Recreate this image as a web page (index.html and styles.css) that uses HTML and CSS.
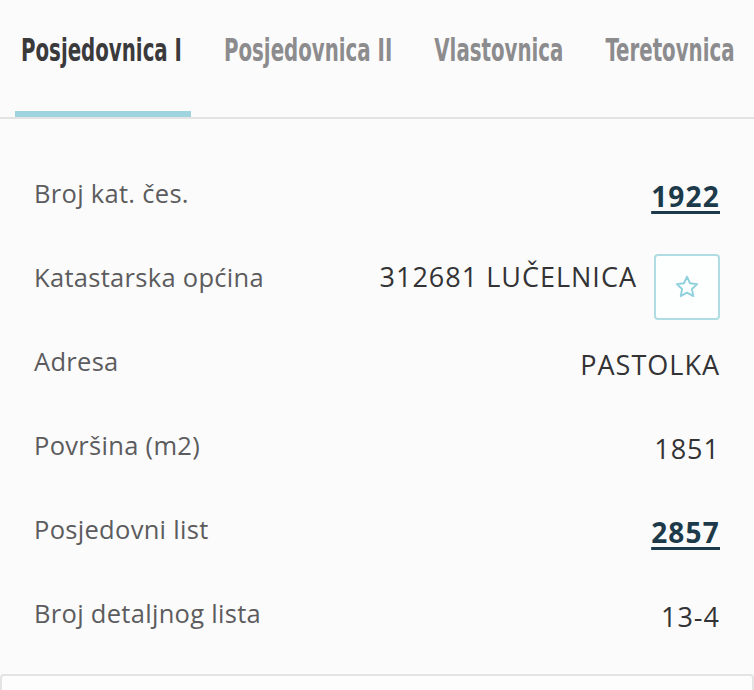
FILE: index.html
```html
<!DOCTYPE html>
<html lang="hr">
<head>
<meta charset="utf-8">
<title>Posjedovnica</title>
<link rel="stylesheet" href="styles.css">
</head>
<body>
<nav class="tabs">
  <div class="tab active"><span class="tab-label">Posjedovnica I</span></div>
  <div class="tab"><span class="tab-label">Posjedovnica II</span></div>
  <div class="tab"><span class="tab-label">Vlastovnica</span></div>
  <div class="tab"><span class="tab-label">Teretovnica</span></div>
</nav>
<section class="details">
  <div class="row">
    <span class="label">Broj kat. čes.</span>
    <a class="value link" href="#">1922</a>
  </div>
  <div class="row">
    <span class="label">Katastarska općina</span>
    <div class="value-group">
      <span class="value">312681 LUČELNICA</span>
      <button class="fav" type="button" aria-label="Favorit">
        <svg viewBox="0 0 24 24" width="28" height="28"><path d="M12 3.2l2.6 5.6 6.1.7-4.5 4.2 1.2 6.1L12 16.8l-5.4 3 1.2-6.1-4.5-4.2 6.1-.7z" fill="none" stroke="#8fd0dd" stroke-width="1.6" stroke-linejoin="round"/></svg>
      </button>
    </div>
  </div>
  <div class="row">
    <span class="label">Adresa</span>
    <span class="value">PASTOLKA</span>
  </div>
  <div class="row">
    <span class="label">Površina (m2)</span>
    <span class="value">1851</span>
  </div>
  <div class="row">
    <span class="label">Posjedovni list</span>
    <a class="value link" href="#">2857</a>
  </div>
  <div class="row">
    <span class="label">Broj detaljnog lista</span>
    <span class="value">13-4</span>
  </div>
</section>
<div class="card"></div>
</body>
</html>
```
FILE: styles.css
```css
* { box-sizing: border-box; }
html, body { margin: 0; padding: 0; }
body {
  background: #fbfbfb;
  width: 754px;
  height: 690px;
  overflow: hidden;
  font-family: "Open Sans", "Lato", "Liberation Sans", sans-serif;
}
.tabs {
  display: flex;
  gap: 27px;
  padding-left: 15px;
  height: 119px;
  border-bottom: 2px solid #e3e3e3;
}
.tab {
  height: 117px;
  padding: 34px 9px 0 6px;
  border-bottom: 6px solid transparent;
  font-family: "DejaVu Sans Condensed", "Liberation Sans Narrow", sans-serif;
  font-weight: 700;
  font-size: 22px;
  line-height: 34px;
  color: #8c8c8e;
  white-space: nowrap;
}
.tab.active {
  color: #3a3a3c;
  border-bottom-color: #9fd4df;
}
.tab-label {
  display: inline-block;
  transform: scaleY(1.48);
  transform-origin: 50% 50%;
}
.details {
  padding: 33px 34px 0 34px;
}
.row {
  height: 84px;
  display: flex;
  justify-content: space-between;
  align-items: center;
}
.label {
  font-size: 25.5px;
  letter-spacing: 0.3px;
  color: #5c5c5e;
  margin-top: -3px;
}
.value {
  font-size: 27px;
  letter-spacing: 1px;
  color: #333335;
  margin-top: 4px;
}
.link {
  color: #1d3a4a;
  font-size: 28px;
  font-weight: 700;
  letter-spacing: 1.2px;
  text-decoration: underline;
  text-decoration-thickness: 3px;
  text-underline-offset: 4px;
}
.value-group {
  display: flex;
  align-items: center;
  gap: 17px;
}
.value-group .value { margin-top: -4px; }
.fav {
  width: 66px;
  height: 66px;
  margin-top: 18px;
  border: 2px solid #b0dce4;
  border-radius: 4px;
  background: #fdfefe;
  display: flex;
  align-items: center;
  justify-content: center;
  padding: 0;
}
.card {
  margin-top: 18px;
  height: 40px;
  border: 2px solid #e4e4e4;
  border-radius: 4px;
  background: #fdfdfd;
}
```
